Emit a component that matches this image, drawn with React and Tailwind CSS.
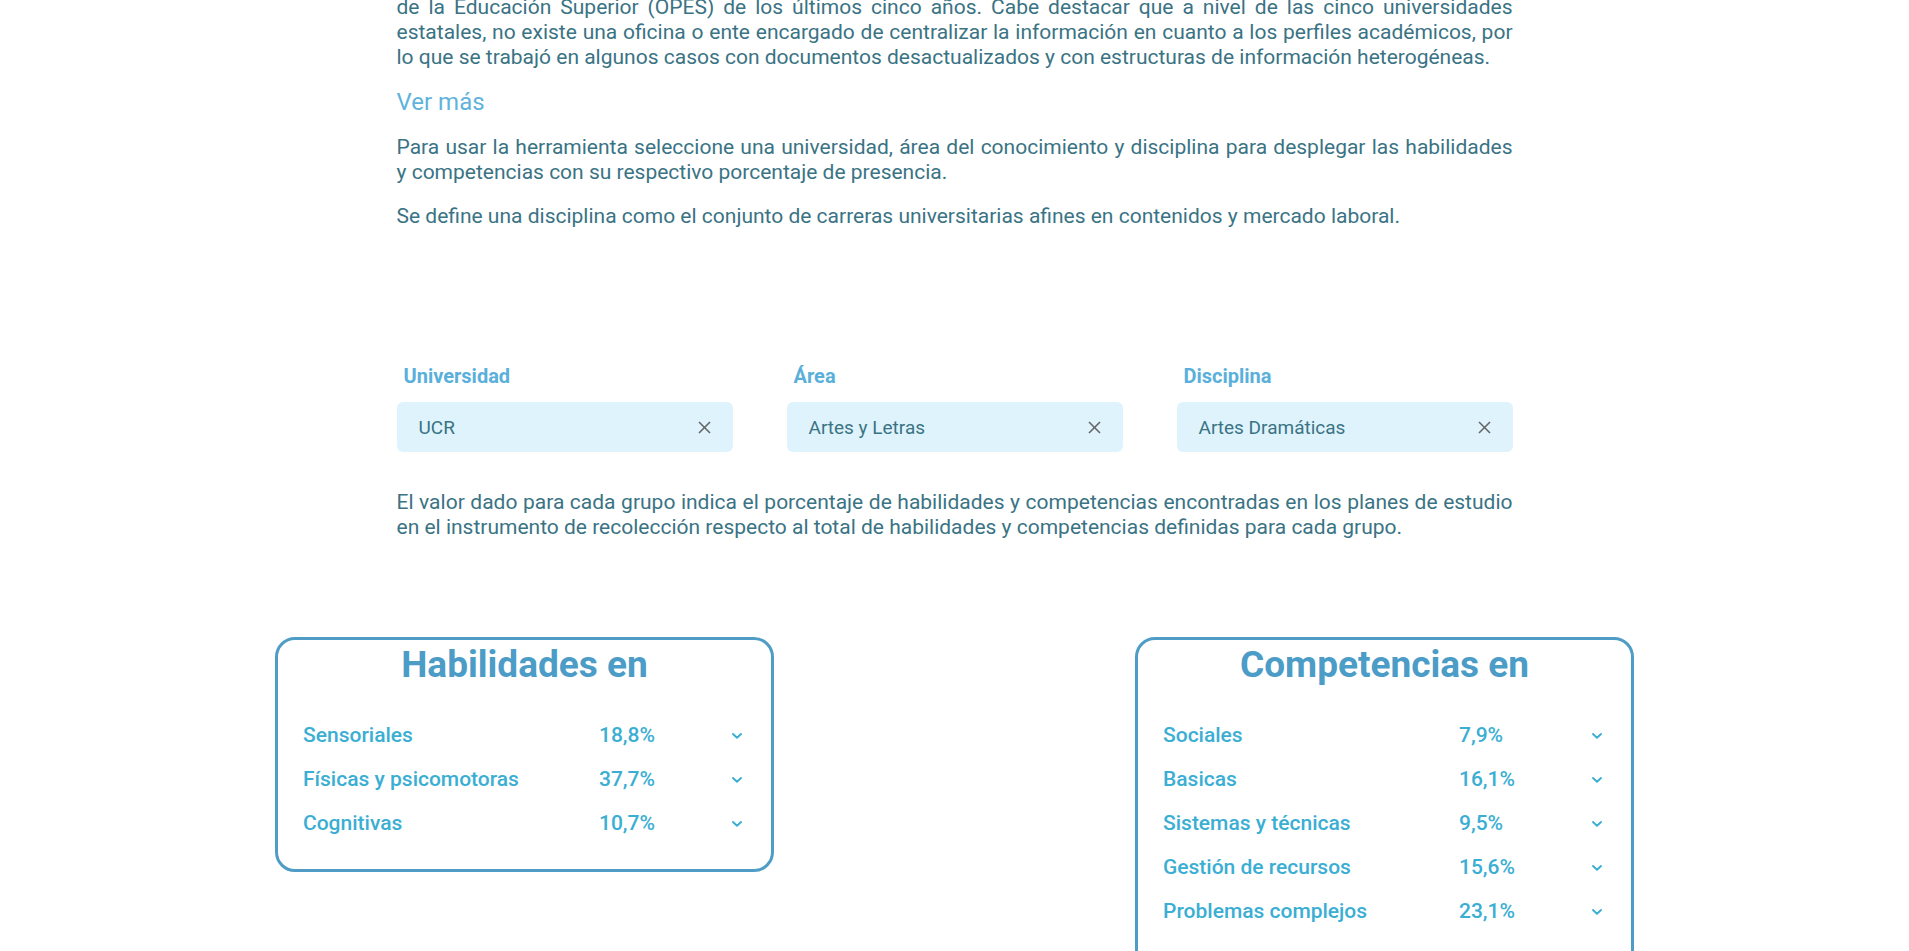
import React from "react";

const habilidades = [
  ["Sensoriales", "18,8%"],
  ["Físicas y psicomotoras", "37,7%"],
  ["Cognitivas", "10,7%"],
];
const competencias = [
  ["Sociales", "7,9%"],
  ["Basicas", "16,1%"],
  ["Sistemas y técnicas", "9,5%"],
  ["Gestión de recursos", "15,6%"],
  ["Problemas complejos", "23,1%"],
];

function Chevron() {
  return (
    <svg width="12" height="8" viewBox="0 0 12 8" fill="none">
      <polyline points="2,2 6,5.8 10,2" stroke="#3aaed3" strokeWidth="1.9" strokeLinecap="round" strokeLinejoin="round" />
    </svg>
  );
}

function XIcon() {
  return (
    <svg width="13" height="13" viewBox="0 0 13 13" fill="none">
      <line x1="1" y1="1" x2="12" y2="12" stroke="#666" strokeWidth="1.6" />
      <line x1="12" y1="1" x2="1" y2="12" stroke="#666" strokeWidth="1.6" />
    </svg>
  );
}

function Select({ label, value }) {
  return (
    <div className="flex flex-col">
      <div className="pl-[7px] text-[20px] leading-[24px] font-bold text-[#5ab0da] mb-[14px]">{label}</div>
      <div className="h-[50px] rounded-[6px] bg-[#dff3fc] flex items-center justify-between pl-[22px] pr-[22px]">
        <span className="text-[19px] text-[#3a7384]">{value}</span>
        <XIcon />
      </div>
    </div>
  );
}

function Card({ title, rows, height }) {
  return (
    <div className={`w-[499px] border-[3px] border-[#4f9dc6] rounded-[20px] pt-[3px] ${height}`}>
      <h2 className="text-center text-[37px] leading-[44px] font-bold text-[#4b9cc6]">{title}</h2>
      <div className="mt-[27px] flex flex-col">
        {rows.map(([name, pct]) => (
          <div key={name} className="h-[44px] flex items-center pl-[25px] pr-[28px] text-[21px] font-medium text-[#3aaed3]">
            <span className="w-[296px]">{name}</span>
            <span className="flex-1">{pct}</span>
            <Chevron />
          </div>
        ))}
      </div>
    </div>
  );
}

function JLine({ children }) {
  return <span className="block text-justify [text-align-last:justify]">{children}</span>;
}

export default function App() {
  return (
    <div className="bg-white min-h-[951px] overflow-hidden" style={{ fontFamily: "Roboto, 'Noto Sans', sans-serif" }}>
      <div className="w-[1116px] mx-auto text-[21px] leading-[25px] text-[#3a7384]">
        <p className="mt-[-5px] mb-[17px]">
          <JLine>de la Educación Superior (OPES) de los últimos cinco años. Cabe destacar que a nivel de las cinco universidades</JLine>
          <JLine>estatales, no existe una oficina o ente encargado de centralizar la información en cuanto a los perfiles académicos, por</JLine>
          <span className="block">lo que se trabajó en algunos casos con documentos desactualizados y con estructuras de información heterogéneas.</span>
        </p>
        <p className="text-[24px] leading-[30px] text-[#5fb3dc] mb-[18px]">Ver más</p>
        <p className="mb-[19px]">
          <JLine>Para usar la herramienta seleccione una universidad, área del conocimiento y disciplina para desplegar las habilidades</JLine>
          <span className="block">y competencias con su respectivo porcentaje de presencia.</span>
        </p>
        <p>Se define una disciplina como el conjunto de carreras universitarias afines en contenidos y mercado laboral.</p>

        <div className="mt-[135px] grid grid-cols-3 gap-[54px]">
          <Select label="Universidad" value="UCR" />
          <Select label="Área" value="Artes y Letras" />
          <Select label="Disciplina" value="Artes Dramáticas" />
        </div>

        <p className="mt-[38px]">
          <JLine>El valor dado para cada grupo indica el porcentaje de habilidades y competencias encontradas en los planes de estudio</JLine>
          <span className="block">en el instrumento de recolección respecto al total de habilidades y competencias definidas para cada grupo.</span>
        </p>
      </div>

      <div className="w-[1359px] mx-auto mt-[97px] flex justify-between items-start">
        <Card title="Habilidades en" rows={habilidades} height="h-[235px]" />
        <Card title="Competencias en" rows={competencias} height="h-[340px]" />
      </div>
    </div>
  );
}
